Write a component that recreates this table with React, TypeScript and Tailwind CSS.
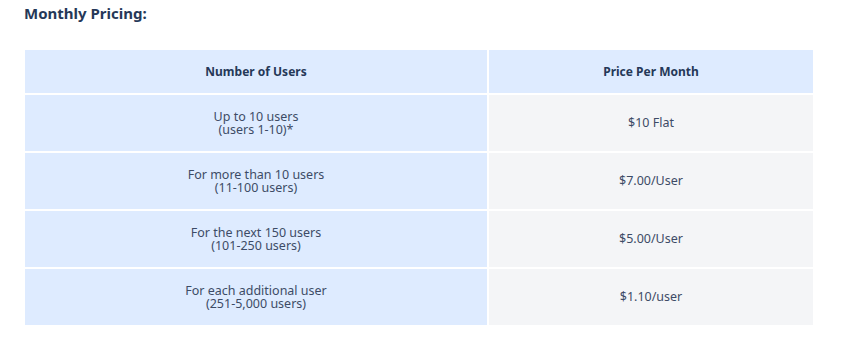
import { Fragment } from "react";

const rows = [
  { users: "Up to 10 users", range: "(users 1-10)*", price: "$10 Flat" },
  { users: "For more than 10 users", range: "(11-100 users)", price: "$7.00/User" },
  { users: "For the next 150 users", range: "(101-250 users)", price: "$5.00/User" },
  { users: "For each additional user", range: "(251-5,000 users)", price: "$1.10/user" },
];

export default function App() {
  return (
    <div className="w-[853px] h-[352px] bg-white font-['Noto_Sans',sans-serif]">
      <h2 className="pl-[24px] pt-[2px] text-[15px] leading-[22px] font-bold text-[#253858]">
        Monthly Pricing:
      </h2>
      <div className="ml-[25px] mt-[26px] grid w-[788px] grid-cols-[462px_324px] gap-[2px]">
        <div className="flex h-[43px] items-center justify-center bg-[#deebff] text-[12px] font-bold text-[#253858]">
          Number of Users
        </div>
        <div className="flex h-[43px] items-center justify-center bg-[#deebff] text-[12px] font-bold text-[#253858]">
          Price Per Month
        </div>
        {rows.map((r) => (
          <Fragment key={r.users}>
            <div className="flex h-[56px] flex-col items-center justify-center bg-[#deebff] text-[12.5px] leading-[13px] text-[#3d4b66]">
              <span>{r.users}</span>
              <span>{r.range}</span>
            </div>
            <div className="flex h-[56px] items-center justify-center bg-[#f4f5f7] text-[12.5px] text-[#3d4b66]">
              {r.price}
            </div>
          </Fragment>
        ))}
      </div>
    </div>
  );
}
